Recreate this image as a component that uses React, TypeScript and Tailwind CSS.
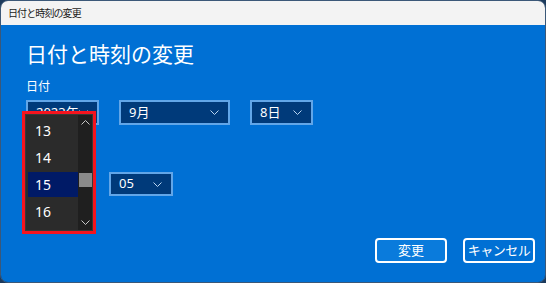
import React from "react";

const jp = { fontFamily: '"Noto Sans", "Noto Sans CJK JP", sans-serif' };

const Chevron = ({ up = false }: { up?: boolean }) => (
  <svg width="9" height="5" viewBox="0 0 9 5" className={up ? "rotate-180" : ""}>
    <path d="M0.5 0.5 L4.5 4.5 L8.5 0.5" fill="none" stroke="currentColor" strokeWidth="1" />
  </svg>
);

const Select = ({
  label,
  width,
  height = "h-[25px]",
  hidden = false,
}: {
  label: string;
  width: string;
  height?: string;
  hidden?: boolean;
}) => (
  <div
    className={`${width} ${height} flex items-center justify-between border-2 border-[#62a6e8] bg-[#003a7a] pl-[8px] pr-[9px] text-[13px] text-white`}
  >
    <span className={hidden ? "invisible" : ""}>{label}</span>
    <span className="text-[#b9d4f0]">
      <Chevron />
    </span>
  </div>
);

const Dropdown = () => {
  const items = ["13", "14", "15", "16"];
  return (
    <div className="absolute left-[21px] top-[110px] h-[123px] w-[74px] border-[3px] border-[#f5141e]">
      <div className="flex h-full border border-[#383838] bg-[#2b2b2b]">
        <div className="flex flex-1 flex-col pt-[2px] pl-[2px]">
          {items.map((n) => (
            <div key={n} className="flex h-[27px] items-center">
              <div
                className={`flex h-[25px] w-full items-center pl-[7px] text-[14px] text-white ${
                  n === "15" ? "bg-[#001a66]" : ""
                }`}
              >
                {n}
              </div>
            </div>
          ))}
        </div>
        <div className="flex w-[14px] flex-col items-center bg-[#1f1f1f] text-[#c8c8c8]">
          <div className="pt-[5px]">
            <Chevron up />
          </div>
          <div className="mt-[48px] h-[14px] w-[13px] bg-[#8a8a8a]" />
          <div className="mt-auto pb-[5px]">
            <Chevron />
          </div>
        </div>
      </div>
    </div>
  );
};

export default function App() {
  return (
    <div className="h-[283px] w-[546px] bg-[#1c3a5c]" style={jp}>
      <div className="relative flex h-full w-full flex-col overflow-hidden rounded-[8px] border border-[#3b5878]">
        <div className="flex h-[24px] shrink-0 items-center bg-[#f3f3f3] pl-[7px] text-[10px] tracking-[-0.9px] text-[#1a1a1a]">
          日付と時刻の変更
        </div>
        <div className="flex flex-1 flex-col bg-[#0070d4] pl-[25px] text-white">
          <div className="mt-[15px] h-[28px] text-[21px] leading-[28px]">日付と時刻の変更</div>
          <div className="mt-[11px] h-[16px] text-[12px] leading-[16px]">日付</div>
          <div className="mt-[5px] flex gap-[20px]">
            <Select label="2023年" width="w-[73px]" />
            <Select label="9月" width="w-[111px]" />
            <Select label="8日" width="w-[63px]" />
          </div>
          <div className="invisible mt-[22px] h-[16px] text-[12px] leading-[16px]">時刻</div>
          <div className="mt-[9px] flex gap-[20px]">
            <Select label="15" width="w-[63px]" height="h-[24px]" hidden />
            <Select label="05" width="w-[64px]" height="h-[24px]" />
          </div>
          <div className="mt-auto mb-[19px] flex justify-end gap-[16px] pr-[10px]">
            <div className="flex h-[25px] w-[72px] items-center justify-center rounded-[4px] border-2 border-white bg-[#0a7bdc] text-[13px]">
              変更
            </div>
            <div className="flex h-[25px] w-[72px] items-center justify-center rounded-[4px] border-2 border-white text-[13px] tracking-[-0.5px]">
              キャンセル
            </div>
          </div>
        </div>
        <Dropdown />
      </div>
    </div>
  );
}
